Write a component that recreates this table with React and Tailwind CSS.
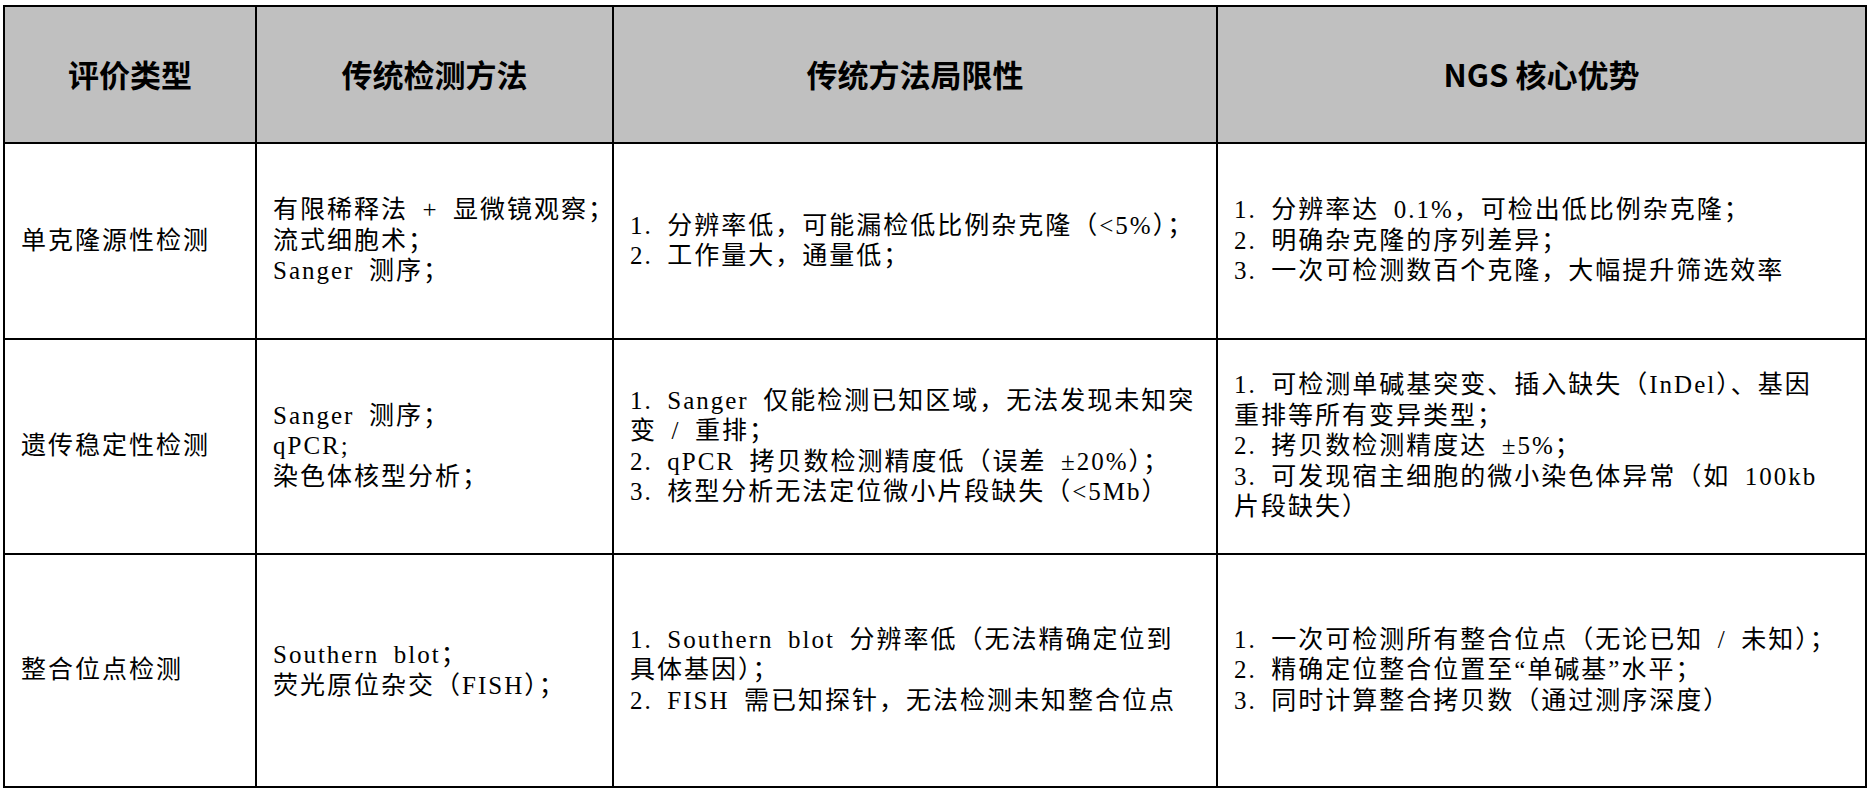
const SP = '\u2002';

const headers = ['评价类型', '传统检测方法', '传统方法局限性', 'NGS 核心优势'];

const rows = [
  {
    type: '单克隆源性检测',
    methods: [`有限稀释法${SP}+${SP}显微镜观察；`, '流式细胞术；', `Sanger${SP}测序；`],
    limits: [`1.${SP}分辨率低，可能漏检低比例杂克隆（<5%）；`, `2.${SP}工作量大，通量低；`],
    ngs: [
      `1.${SP}分辨率达${SP}0.1%，可检出低比例杂克隆；`,
      `2.${SP}明确杂克隆的序列差异；`,
      `3.${SP}一次可检测数百个克隆，大幅提升筛选效率`,
    ],
  },
  {
    type: '遗传稳定性检测',
    methods: [`Sanger${SP}测序；`, 'qPCR;', '染色体核型分析；'],
    limits: [
      `1.${SP}Sanger${SP}仅能检测已知区域，无法发现未知突`,
      `变${SP}/${SP}重排；`,
      `2.${SP}qPCR${SP}拷贝数检测精度低（误差${SP}±20%）；`,
      `3.${SP}核型分析无法定位微小片段缺失（<5Mb）`,
    ],
    ngs: [
      `1.${SP}可检测单碱基突变、插入缺失（InDel）、基因`,
      '重排等所有变异类型；',
      `2.${SP}拷贝数检测精度达${SP}±5%；`,
      `3.${SP}可发现宿主细胞的微小染色体异常（如${SP}100kb`,
      '片段缺失）',
    ],
  },
  {
    type: '整合位点检测',
    methods: [`Southern${SP}blot；`, '荧光原位杂交（FISH）；'],
    limits: [
      `1.${SP}Southern${SP}blot${SP}分辨率低（无法精确定位到`,
      '具体基因）；',
      `2.${SP}FISH${SP}需已知探针，无法检测未知整合位点`,
    ],
    ngs: [
      `1.${SP}一次可检测所有整合位点（无论已知${SP}/${SP}未知）；`,
      `2.${SP}精确定位整合位置至“单碱基”水平；`,
      `3.${SP}同时计算整合拷贝数（通过测序深度）`,
    ],
  },
];

function Lines({ lines }) {
  return (
    <div className="flex flex-col">
      {lines.map((l, i) => (
        <span key={i} className="whitespace-pre">
          {l}
        </span>
      ))}
    </div>
  );
}

export default function App() {
  const body =
    "flex items-center border-r-2 border-b-2 border-black pl-4 text-[25px] leading-[30.5px] tracking-[2px] text-black font-['Liberation_Serif','Noto_Sans_CJK_SC',serif]";
  return (
    <div className="h-[794px] w-[1874px] bg-white pl-[3px] pt-[5px]">
      <div className="grid w-[1864px] grid-cols-[252px_357px_604px_649px] grid-rows-[137px_196px_215px_233px] border-l-2 border-t-2 border-black">
        {headers.map((h) => (
          <div
            key={h}
            className="flex items-center justify-center border-r-2 border-b-2 border-black bg-[#c0c0c0] text-[31px] font-bold text-black font-['Noto_Sans_CJK_SC',sans-serif]"
          >
            {h}
          </div>
        ))}
        {rows.map((r) => [
          <div key={r.type + 'a'} className={body}>
            {r.type}
          </div>,
          <div key={r.type + 'b'} className={body}>
            <Lines lines={r.methods} />
          </div>,
          <div key={r.type + 'c'} className={body}>
            <Lines lines={r.limits} />
          </div>,
          <div key={r.type + 'd'} className={body}>
            <Lines lines={r.ngs} />
          </div>,
        ])}
      </div>
    </div>
  );
}
